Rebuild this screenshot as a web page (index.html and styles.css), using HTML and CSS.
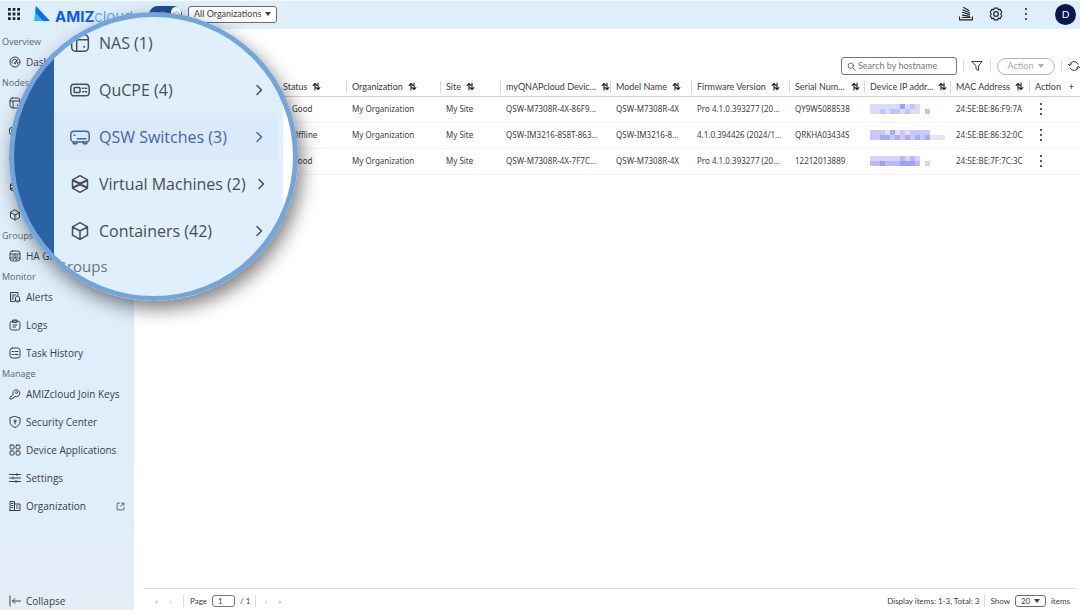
FILE: index.html
```html
<!DOCTYPE html>
<html lang="en">
<head>
	<meta charset="utf-8">
	<meta name="viewport" content="width=device-width, initial-scale=1">
	<title>AMIZcloud - QSW Switches</title>
	<link rel="stylesheet" href="styles.css">
</head>
<body>

	<!-- Icon set, used below with <use> -->
	<svg class="icon-set" aria-hidden="true">
		<symbol id="i-dash" viewBox="0 0 24 24"><circle cx="12" cy="12" r="10"/><path d="M6 14a6 6 0 0 1 8-7M18 12a6 6 0 0 1-1 4M11 14l6-7-4 8z"/></symbol>
		<symbol id="i-nas" viewBox="0 0 24 24"><rect x="2" y="2" width="20" height="20" rx="5"/><path d="M2 8h20M8 8v14M17 16v1"/></symbol>
		<symbol id="i-cpe" viewBox="0 0 24 24"><rect x="1" y="5" width="22" height="14" rx="4"/><rect x="5" y="9" width="7" height="6" rx="1"/><path d="M15 10h1M18 10h2M15 14h1M18 14h2"/></symbol>
		<symbol id="i-switch" viewBox="0 0 24 24"><rect x="1" y="5" width="22" height="13" rx="4"/><path d="M4 18v2h4v-2M16 18v2h4v-2M5 10h1M9 14h10"/></symbol>
		<symbol id="i-vm" viewBox="0 0 24 24"><path d="M12 2l9 5v10l-9 5-9-5V7zM3 7l9 4 9-4M3 17l9-4 9 4M3 8l18 8M21 8L3 16"/></symbol>
		<symbol id="i-box" viewBox="0 0 24 24"><path d="M12 2l9 5v10l-9 5-9-5V7zM3 7l9 5 9-5M12 12v10"/></symbol>
		<symbol id="i-ha" viewBox="0 0 24 24"><rect x="2" y="2" width="20" height="20" rx="5"/><path d="M2 8h20M2 16h20M7 12h2M12 8v8M15 12h3M8 19h1M14 19h2"/></symbol>
		<symbol id="i-alert" viewBox="0 0 24 24"><path d="M10 21H3V3h15v5M6 8h8M6 12h4M6 16h3M11 20h12M13 20v-6a4 4 0 0 1 8 0v6M16 22h2"/></symbol>
		<symbol id="i-log" viewBox="0 0 24 24"><rect x="2" y="4" width="20" height="18" rx="5"/><path d="M8 2h8v5H8zM8 12h8M8 16h5"/></symbol>
		<symbol id="i-task" viewBox="0 0 24 24"><rect x="2" y="2" width="20" height="20" rx="5"/><path d="M6 9h3M6 15h3M12 9h6M12 15h6"/></symbol>
		<symbol id="i-key" viewBox="0 0 24 24"><path d="M8 13a7 7 0 1 1 4 4l-2 1-1 2H7l-1 2H2v-3z"/><circle cx="15" cy="9" r="2"/></symbol>
		<symbol id="i-shield" viewBox="0 0 24 24"><path d="M12 1l10 3v8c0 5-5 9-10 11-5-2-10-6-10-11V4z"/><circle cx="12" cy="10" r="2"/><path d="M12 12v4"/></symbol>
		<symbol id="i-apps" viewBox="0 0 24 24"><rect x="2" y="2" width="8" height="8" rx="2"/><rect x="14" y="2" width="8" height="8" rx="2"/><rect x="2" y="14" width="8" height="8" rx="2"/><rect x="14" y="14" width="8" height="8" rx="2"/></symbol>
		<symbol id="i-sliders" viewBox="0 0 24 24"><path d="M1 5h22M1 12h22M1 19h22M16 3v4M8 10v4M14 17v4"/></symbol>
		<symbol id="i-org" viewBox="0 0 24 24"><path d="M2 21V3h9v18M11 8h11v13H1M5 7h3M5 11h3M5 15h3M15 12h3M15 16h3"/></symbol>
		<symbol id="i-out" viewBox="0 0 24 24"><path d="M10 3H3v18h18v-7M15 3h6v6M21 3l-9 9"/></symbol>
		<symbol id="i-collapse" viewBox="0 0 24 24"><path d="M2 2v20M23 12H7M12 7l-5 5 5 5"/></symbol>
		<symbol id="i-chev" viewBox="0 0 24 24"><path d="M8 3l9 9-9 9"/></symbol>
		<symbol id="i-sort" viewBox="0 0 24 24"><path d="M8 21V4M3 9l5-5 5 5M16 3v17M11 15l5 5 5-5"/></symbol>
		<symbol id="i-search" viewBox="0 0 24 24"><circle cx="10" cy="10" r="7"/><path d="M15 15l7 7"/></symbol>
		<symbol id="i-filter" viewBox="0 0 24 24"><path d="M2 3h20l-7 9v9l-5-3v-6z"/></symbol>
		<symbol id="i-refresh" viewBox="0 0 24 24"><path d="M3 11a9 9 0 0 1 17-3M21 13a9 9 0 0 1-17 3M0 8l3 3 4-3M24 16l-3-3-4 3"/></symbol>
		<symbol id="i-tasks" viewBox="0 0 24 24"><path d="M1 17v5h22v-5M6 18h13M6 14l12 2M6 9l12 4M7 5l11 5M8 1l9 5"/></symbol>
		<symbol id="i-gear" viewBox="0 0 24 24"><path d="M9 2h6l1 3 3-1 3 5-2 3 2 3-3 5-3-1-1 3H9l-1-3-3 1-3-5 2-3-2-3 3-5 3 1z"/><circle cx="12" cy="12" r="4"/></symbol>
		<symbol id="i-cloud" viewBox="0 0 24 24"><path d="M6 19a5 5 0 0 1 0-10 7 7 0 0 1 13 1 5 5 0 0 1-1 9z"/></symbol>
	</svg>

	<header class="topbar">
		<button class="icon-btn" aria-label="Apps">
			<svg class="app-grid" viewBox="0 0 13 13"><path d="M0 0h3v3H0zM5 0h3v3H5zM10 0h3v3h-3zM0 5h3v3H0zM5 5h3v3H5zM10 5h3v3h-3zM0 10h3v3H0zM5 10h3v3H5zM10 10h3v3h-3z"/></svg>
		</button>
		<a class="logo" href="#">
			<svg class="logo-mark" viewBox="0 0 16 16"><path fill="#0a6cf5" d="M2 0l14 15H9L1 7z"/><path fill="#25bdf7" d="M2 0v7l7 8H0z"/></svg>
			<span class="logo-text"><b>AMIZ</b>cloud</span>
		</a>
		<label class="toggle">
			<input type="checkbox" aria-label="Cloud mode" checked>
			<svg class="icon"><use href="#i-cloud"/></svg>
			<span class="knob"><svg class="icon"><use href="#i-cloud"/></svg></span>
		</label>
		<span class="select org-select">
			<select aria-label="Organization"><option>All Organizations</option></select>
		</span>
		<div class="topbar-right">
			<button class="icon-btn" aria-label="Background tasks"><svg class="icon icon-lg"><use href="#i-tasks"/></svg></button>
			<button class="icon-btn" aria-label="Settings"><svg class="icon icon-lg"><use href="#i-gear"/></svg></button>
			<button class="icon-btn" aria-label="More"><span class="dots"></span></button>
			<button class="avatar" aria-label="Account">D</button>
		</div>
	</header>

	<div class="page">
		<nav class="sidebar">
			<h2>Overview</h2>
			<a href="#"><svg class="icon"><use href="#i-dash"/></svg>Dashboard</a>
			<h2>Nodes</h2>
			<a href="#" aria-label="NAS"><svg class="icon"><use href="#i-nas"/></svg></a>
			<a href="#" aria-label="QuCPE"><svg class="icon"><use href="#i-cpe"/></svg></a>
			<a href="#" aria-label="QSW Switches"><svg class="icon"><use href="#i-switch"/></svg></a>
			<a href="#" aria-label="Virtual Machines"><svg class="icon"><use href="#i-vm"/></svg></a>
			<a href="#" aria-label="Containers"><svg class="icon"><use href="#i-box"/></svg></a>
			<h2>Groups</h2>
			<a href="#"><svg class="icon"><use href="#i-ha"/></svg>HA Groups</a>
			<h2>Monitor</h2>
			<a href="#"><svg class="icon"><use href="#i-alert"/></svg>Alerts</a>
			<a href="#"><svg class="icon"><use href="#i-log"/></svg>Logs</a>
			<a href="#"><svg class="icon"><use href="#i-task"/></svg>Task History</a>
			<h2>Manage</h2>
			<a href="#"><svg class="icon"><use href="#i-key"/></svg>AMIZcloud Join Keys</a>
			<a href="#"><svg class="icon"><use href="#i-shield"/></svg>Security Center</a>
			<a href="#"><svg class="icon"><use href="#i-apps"/></svg>Device Applications</a>
			<a href="#"><svg class="icon"><use href="#i-sliders"/></svg>Settings</a>
			<a href="#"><svg class="icon"><use href="#i-org"/></svg>Organization<svg class="icon icon-sm out"><use href="#i-out"/></svg></a>
			<button class="collapse"><svg class="icon"><use href="#i-collapse"/></svg>Collapse</button>
		</nav>

		<main class="content">
			<div class="toolbar">
				<label class="search">
					<svg class="icon icon-sm"><use href="#i-search"/></svg>
					<input type="text" aria-label="Search" placeholder="Search by hostname">
				</label>
				<span class="sep"></span>
				<button class="icon-btn" aria-label="Filter"><svg class="icon"><use href="#i-filter"/></svg></button>
				<span class="sep"></span>
				<button class="action" disabled>Action <span class="caret"></span></button>
				<span class="sep"></span>
				<button class="icon-btn refresh" aria-label="Refresh"><svg class="icon"><use href="#i-refresh"/></svg></button>
			</div>

			<table class="devices">
				<colgroup>
					<col class="c-host"><col class="c-status"><col class="c-org"><col class="c-site"><col class="c-device"><col class="c-model"><col class="c-fw"><col class="c-serial"><col class="c-ip"><col class="c-mac"><col class="c-action">
				</colgroup>
				<thead>
					<tr>
						<th aria-label="Hostname"></th>
						<th><div>Status<button class="sort" aria-label="Sort by status"><svg class="icon icon-sm"><use href="#i-sort"/></svg></button></div></th>
						<th><div>Organization<button class="sort" aria-label="Sort by organization"><svg class="icon icon-sm"><use href="#i-sort"/></svg></button></div></th>
						<th><div>Site<button class="sort" aria-label="Sort by site"><svg class="icon icon-sm"><use href="#i-sort"/></svg></button></div></th>
						<th><div class="wide">myQNAPcloud Devic...<button class="sort" aria-label="Sort by device name"><svg class="icon icon-sm"><use href="#i-sort"/></svg></button></div></th>
						<th><div>Model Name<button class="sort" aria-label="Sort by model"><svg class="icon icon-sm"><use href="#i-sort"/></svg></button></div></th>
						<th><div>Firmware Version<button class="sort" aria-label="Sort by firmware"><svg class="icon icon-sm"><use href="#i-sort"/></svg></button></div></th>
						<th><div class="wide">Serial Num...<button class="sort" aria-label="Sort by serial number"><svg class="icon icon-sm"><use href="#i-sort"/></svg></button></div></th>
						<th><div class="wide">Device IP addr...<button class="sort" aria-label="Sort by IP address"><svg class="icon icon-sm"><use href="#i-sort"/></svg></button></div></th>
						<th><div>MAC Address<button class="sort" aria-label="Sort by MAC address"><svg class="icon icon-sm"><use href="#i-sort"/></svg></button></div></th>
						<th><div class="wide">Action<button class="sort add" aria-label="Add column">+</button></div></th>
					</tr>
				</thead>
				<tbody>
					<tr>
						<td></td><td class="status">Good</td><td>My Organization</td><td>My Site</td><td>QSW-M7308R-4X-86F9...</td><td>QSW-M7308R-4X</td><td>Pro 4.1.0.393277 (20...</td><td>QY9W5088538</td>
						<td><svg class="mosaic" viewBox="0 0 75 10"><path fill="#dadafc" d="M0 0h50v10H0z"/><path fill="#c3c3fa" d="M10 5h5v5h-5zM20 5h10v5H20zM40 0h5v5h-5zM35 5h5v5h-5zM55 5h5v5h-5z"/><path fill="#9f9ff5" d="M30 0h5v5h-5z"/></svg></td>
						<td>24:5E:BE:86:F9:7A</td><td><button class="row-menu" aria-label="Row actions"><span class="dots"></span></button></td>
					</tr>
					<tr>
						<td></td><td class="status">Offline</td><td>My Organization</td><td>My Site</td><td>QSW-IM3216-8S8T-863...</td><td>QSW-IM3216-8...</td><td>4.1.0.394426 (2024/1...</td><td>QRKHA03434S</td>
						<td><svg class="mosaic" viewBox="0 0 75 10"><path fill="#c8c8fb" d="M0 0h60v10H0z"/><path fill="#e3e3fd" d="M15 0h5v5h-5zM25 0h5v5h-5zM35 0h5v5h-5zM60 5h15v5H60z"/><path fill="#abaaf7" d="M10 5h10v5H10zM25 5h5v5h-5zM35 5h5v5h-5zM45 5h5v5h-5zM55 5h5v5h-5zM20 0h5v5h-5z"/></svg></td>
						<td>24:5E:BE:86:32:0C</td><td><button class="row-menu" aria-label="Row actions"><span class="dots"></span></button></td>
					</tr>
					<tr>
						<td></td><td class="status">Good</td><td>My Organization</td><td>My Site</td><td>QSW-M7308R-4X-7F7C...</td><td>QSW-M7308R-4X</td><td>Pro 4.1.0.393277 (20...</td><td>12212013889</td>
						<td><svg class="mosaic" viewBox="0 0 75 10"><path fill="#d5d5fc" d="M0 0h50v10H0z"/><path fill="#b9b9f9" d="M0 5h50v5H0zM30 0h5v5h-5zM40 0h5v5h-5z"/><path fill="#d5d5fc" d="M55 5h5v5h-5z"/><path fill="#a09ff5" d="M10 5h5v5h-5zM30 5h15v5H30z"/></svg></td>
						<td>24:5E:BE:7F:7C:3C</td><td><button class="row-menu" aria-label="Row actions"><span class="dots"></span></button></td>
					</tr>
				</tbody>
			</table>

			<footer class="pager">
				<button class="page-btn" aria-label="First page" disabled>«</button>
				<button class="page-btn" aria-label="Previous page" disabled>‹</button>
				<span class="sep"></span>
				<label class="page-no">Page <input type="text" value="1"></label>
				<span>/ 1</span>
				<span class="sep"></span>
				<button class="page-btn" aria-label="Next page" disabled>›</button>
				<button class="page-btn" aria-label="Last page" disabled>»</button>
				<span class="total">Display items: 1-3, Total: 3</span>
				<span class="sep"></span>
				<label class="page-size">Show <span class="select"><select><option>20</option></select></span> items</label>
			</footer>
		</main>
	</div>

	<!-- Magnifier over the Nodes menu -->
	<aside class="lens">
		<div class="lens-menu">
			<a href="#"><svg class="icon"><use href="#i-nas"/></svg>NAS (1)</a>
			<a href="#"><svg class="icon"><use href="#i-cpe"/></svg>QuCPE (4)<svg class="icon chev"><use href="#i-chev"/></svg></a>
			<a href="#" class="active"><svg class="icon"><use href="#i-switch"/></svg>QSW Switches (3)<svg class="icon chev"><use href="#i-chev"/></svg></a>
			<a href="#"><svg class="icon"><use href="#i-vm"/></svg>Virtual Machines (2)<svg class="icon chev"><use href="#i-chev"/></svg></a>
			<a href="#"><svg class="icon"><use href="#i-box"/></svg>Containers (42)<svg class="icon chev"><use href="#i-chev"/></svg></a>
			<h2>Groups</h2>
		</div>
	</aside>

</body>
</html>
```
FILE: styles.css
```css
*{
	box-sizing: border-box;
	margin: 0;
	padding: 0;
}
body{
	display: flex;
	flex-direction: column;
	min-height: 100vh;
	overflow-x: hidden;
	font-family: Lato, "Open Sans", sans-serif;
	font-size: 9px;
	line-height: 12px;
	color: #3c4043;
	background: #fff;
}
a{
	color: inherit;
	text-decoration: none;
}
button, input, select{
	font: inherit;
	color: inherit;
	background: none;
	border: none;
	outline: none;
}
.icon-set{
	display: none;
}
.icon{
	flex: none;
	width: 12px;
	height: 12px;
	fill: none;
	stroke: currentColor;
	stroke-width: 2;
	stroke-linecap: round;
	stroke-linejoin: round;
}
.icon-sm{
	width: 9px;
	height: 9px;
}
.icon-lg{
	width: 14px;
	height: 14px;
}
.icon-btn{
	display: flex;
	align-items: center;
	justify-content: center;
}
.sep{
	width: 1px;
	height: 12px;
	background: #dcdcdc;
}
.dots{
	display: block;
	width: 2px;
	height: 2px;
	border-radius: 1px;
	background: #222;
	box-shadow: 0 -5px #222, 0 5px #222;
}

/* select box with its own arrow */
.select{
	display: inline-flex;
	align-items: center;
	border: 1px solid #6b6f73;
	border-radius: 3px;
	background: #fff;
}
.select select{
	appearance: none;
	flex: 1;
	min-width: 0;
	padding-left: 5px;
}
.select::after, .caret{
	content: "";
	border: 3px solid transparent;
	border-top: 4px solid currentColor;
	border-bottom: none;
	margin-right: 5px;
}

/* top bar */
.topbar{
	display: flex;
	align-items: center;
	height: 29px;
	padding: 0 4px 2px 8px;
	border-top: 1px solid #f7fafd;
	background: #dfeefb;
}
.app-grid{
	width: 12px;
	height: 12px;
	fill: #222;
}
.logo{
	display: flex;
	align-items: center;
	gap: 5px;
	width: 115px;
	margin-left: 14px;
}
.logo-mark{
	flex: none;
	width: 16px;
	height: 16px;
}
.logo-text{
	padding-top: 5px;
	font: 300 15px/18px Inter, sans-serif;
	color: #2aa5f5;
}
.logo-text b{
	font-weight: 700;
	color: #0c5cf0;
}
.toggle{
	display: flex;
	align-items: center;
	gap: 4px;
	width: 33px;
	height: 17px;
	padding-left: 4px;
	border: 1px solid #1d4f96;
	border-radius: 9px;
	background: #1d4f96;
	color: #7ca4d8;
}
.toggle input{
	appearance: none;
}
.toggle .icon{
	width: 9px;
	height: 9px;
}
.knob{
	display: flex;
	align-items: center;
	justify-content: center;
	width: 16px;
	height: 15px;
	border-radius: 8px;
	background: #fff;
}
.org-select{
	width: 89px;
	height: 17px;
	margin-left: 6px;
}
.topbar-right{
	display: flex;
	align-items: center;
	margin-left: auto;
	color: #222;
}
.topbar-right .icon-btn{
	width: 30px;
}
.avatar{
	width: 21px;
	height: 21px;
	margin-left: 14px;
	border-radius: 50%;
	background: #0a1652;
	color: #fff;
	font-size: 10px;
}

/* page */
.page{
	display: flex;
	flex: 1;
}
.sidebar{
	display: flex;
	flex-direction: column;
	width: 134px;
	padding: 6px 0 2px;
	background: linear-gradient(#dfeefb 75%, #e5edf6);
	font-family: "Open Sans", sans-serif;
	font-size: 10px;
}
.sidebar h2{
	height: 13px;
	padding-left: 2px;
	font-size: 9px;
	font-weight: 400;
	line-height: 13px;
	color: #5f6469;
}
.sidebar a, .collapse{
	display: flex;
	align-items: center;
	gap: 5px;
	height: 28px;
	padding: 0 9px;
	white-space: nowrap;
}
.out{
	margin-left: auto;
}
.collapse{
	height: 14px;
	margin-top: auto;
}
.content{
	display: flex;
	flex: 1;
	flex-direction: column;
	min-width: 0;
	padding: 28px 0 0 10px;
}

/* toolbar */
.toolbar{
	display: flex;
	align-items: center;
	justify-content: flex-end;
	gap: 6px;
	height: 18px;
}
.search{
	display: flex;
	align-items: center;
	gap: 2px;
	width: 116px;
	height: 18px;
	padding-left: 5px;
	border: 1px solid #777;
	border-radius: 3px;
}
.search input{
	flex: 1;
	min-width: 0;
}
.search input::placeholder{
	color: #777;
}
.toolbar .icon-btn{
	width: 14px;
}
.toolbar .refresh{
	width: 12px;
}
.toolbar .action{
	display: flex;
	align-items: center;
	justify-content: center;
	gap: 5px;
	width: 58px;
	height: 17px;
	border: 1px solid #b5b5b5;
	border-radius: 9px;
	color: #aaa;
}
.caret{
	margin: 0;
}

/* device table */
.devices{
	width: 100%;
	table-layout: fixed;
	border-collapse: collapse;
}
.c-host{ width: 133px; }
.c-status{ width: 69px; }
.c-org{ width: 94px; }
.c-site{ width: 60px; }
.c-device{ width: 110px; }
.c-model{ width: 81px; }
.c-fw{ width: 98px; }
.c-serial{ width: 75px; }
.c-ip{ width: 86px; }
.c-mac{ width: 79px; }
.c-action{ width: 51px; }
.devices th{
	height: 21px;
	padding-bottom: 3px;
	font-weight: 400;
	text-align: left;
	vertical-align: bottom;
	border-bottom: 1px solid #cfcfcf;
}
.devices th div{
	display: flex;
	align-items: center;
	gap: 5px;
	padding: 0 4px 0 5px;
	border-left: 1px solid #d6d6d6;
	white-space: nowrap;
}
.devices th:nth-child(2) div{
	border-color: transparent;
}
.devices .wide{
	justify-content: space-between;
}
.sort{
	display: flex;
	color: #222;
}
.sort .icon{
	stroke-width: 3;
}
.add{
	padding-right: 2px;
}
.devices td{
	height: 26px;
	padding-left: 6px;
	border-bottom: 1px solid #f4f4f4;
	font-family: "Noto Sans", sans-serif;
	font-size: 8px;
	white-space: nowrap;
}
.devices .status{
	padding-left: 15px;
}
.mosaic{
	display: block;
	width: 75px;
	height: 10px;
}
.row-menu{
	display: flex;
	padding: 6px 5px;
}

/* pager */
.pager{
	display: flex;
	align-items: center;
	gap: 5px;
	height: 22px;
	margin: auto 5px 0 0;
	padding: 3px 5px 0 8px;
	border-top: 1px solid #dcdcdc;
	font-size: 8px;
}
.page-btn{
	width: 9px;
	color: #aaa;
}
.page-btn + .sep{
	margin: 0 1px 0 3px;
}
.page-no, .page-size{
	display: flex;
	align-items: center;
	gap: 5px;
}
.page-no input{
	width: 23px;
	height: 12px;
	padding-left: 5px;
	border: 1px solid #777;
	border-radius: 3px;
}
.total{
	margin-left: auto;
}
.page-size .select{
	width: 31px;
	height: 12px;
}

/* magnifier */
.lens{
	position: absolute;
	top: 12px;
	left: 9px;
	width: 289px;
	height: 289px;
	overflow: hidden;
	border: 5px solid #74a5da;
	border-radius: 50%;
	background: linear-gradient(90deg, #2b62a3 40px, #dfeffc 40px, #dfeffc 269px, #fff 269px);
	box-shadow: 4px 8px 18px rgba(0, 0, 0, .5);
}
.lens-menu{
	display: flex;
	flex-direction: column;
	margin: 2px 16px 0 40px;
	font-family: "Open Sans", sans-serif;
	font-size: 16px;
	line-height: 24px;
	color: #4a4d52;
}
.lens-menu a{
	display: flex;
	align-items: center;
	gap: 9px;
	height: 47px;
	padding: 0 12px 0 16px;
	white-space: nowrap;
}
.lens-menu .active{
	color: #3f65b0;
	background: #daeafa;
}
.lens-menu .icon{
	width: 20px;
	height: 20px;
	stroke-width: 1.8;
}
.lens-menu .chev{
	width: 12px;
	height: 12px;
	margin-left: auto;
	stroke-width: 3;
}
.lens-menu h2{
	padding-left: 2px;
	font-size: 15px;
	font-weight: 400;
	color: #6d7278;
}
```
